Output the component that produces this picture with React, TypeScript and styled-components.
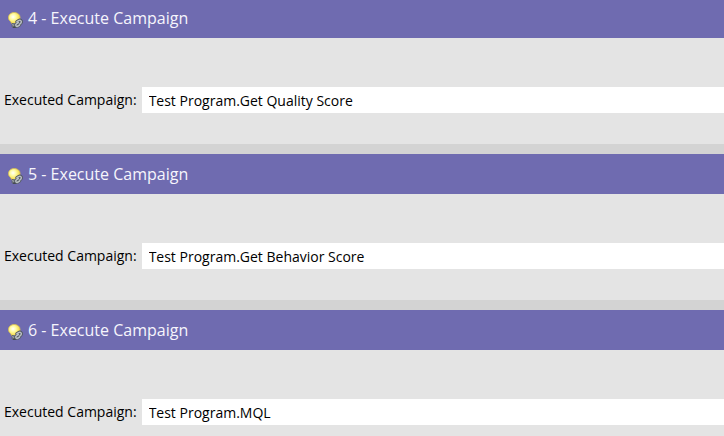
import React, { useId, useState } from "react";
import styled, { createGlobalStyle } from "styled-components";

const GlobalStyle = createGlobalStyle`
  * { box-sizing: border-box; }
  body {
    margin: 0;
    background: #d3d3d3;
    font-family: "Open Sans", "Noto Sans", sans-serif;
  }
`;

const Viewport = styled.main`
  height: 100vh;
  overflow: hidden;
`;

const StepList = styled.div`
  display: flex;
  flex-direction: column;
  gap: 10px;
  margin-top: -2px;
`;

const Step = styled.section`
  background: #e4e4e4;
`;

const StepHeader = styled.header`
  display: flex;
  align-items: center;
  gap: 4px;
  height: 40px;
  padding: 0 8px;
  background: #6f6bb0;
`;

const StepTitle = styled.h2`
  margin: 0;
  color: #f6f5fc;
  font-size: 16px;
  font-weight: 400;
  line-height: 24px;
`;

const BulbSvg = styled.svg`
  flex: none;
  width: 16px;
  height: 16px;
  margin-top: 4px;
`;

const StepBody = styled.div`
  display: flex;
  align-items: center;
  gap: 5px;
  padding: 49px 0 31px 4px;
`;

const FieldLabel = styled.label`
  flex: none;
  color: #000;
  font-size: 14px;
  line-height: 26px;
`;

const FieldInput = styled.input`
  flex: 1;
  min-width: 0;
  height: 26px;
  padding: 0 7px;
  border: 0;
  border-radius: 0;
  outline: 0;
  background: #fff;
  color: #000;
  font-family: inherit;
  font-size: 14px;
`;

function BulbIcon() {
  const id = useId();
  return (
    <BulbSvg viewBox="0 0 16 16" aria-hidden="true">
      <defs>
        <radialGradient id={id} cx="0.4" cy="0.4" r="0.65">
          <stop offset="0" stopColor="#ffffff" />
          <stop offset="0.4" stopColor="#fffba0" />
          <stop offset="1" stopColor="#f0d030" />
        </radialGradient>
      </defs>
      <path
        d="M6.2 0.4C2.8 0.4 0.4 2.7 0.4 5.6C0.4 7.6 1.5 8.7 2.6 9.7C3.3 10.4 3.6 11 3.7 11.7H8.6C8.7 10.9 9.2 10.2 10 9.4C11.3 8.3 12.1 7.2 12.1 5.6C12.1 2.7 9.6 0.4 6.2 0.4Z"
        fill={`url(#${id})`}
        stroke="#d3bd58"
        strokeWidth="0.8"
      />
      <path d="M3.8 11H9V14.4L7.6 16H5.1L3.8 14.4Z" fill="#454b50" />
      <path d="M4 12.3L7.8 11.8M4.2 14L7.6 13.4" stroke="#b9bec2" strokeWidth="0.9" />
      <g fill="none" strokeLinecap="round">
        <path
          d="M8.8 9.8L10.6 8.6C12.4 7.4 14.2 9.2 13 10.9L11.8 12M10.4 10.6L8.4 11.9C6.8 13.2 8.3 15.1 10 14L11.6 13"
          stroke="#50575e"
          strokeWidth="3"
        />
        <path
          d="M8.8 9.8L10.6 8.6C12.4 7.4 14.2 9.2 13 10.9L11.8 12M10.4 10.6L8.4 11.9C6.8 13.2 8.3 15.1 10 14L11.6 13"
          stroke="#b9bfc3"
          strokeWidth="1.5"
        />
      </g>
    </BulbSvg>
  );
}

function CampaignStep({ number, campaign }: { number: number; campaign: string }) {
  const id = useId();
  const [value, setValue] = useState(campaign);
  return (
    <Step>
      <StepHeader>
        <BulbIcon />
        <StepTitle>{number} - Execute Campaign</StepTitle>
      </StepHeader>
      <StepBody>
        <FieldLabel htmlFor={id}>Executed Campaign:</FieldLabel>
        <FieldInput id={id} type="text" value={value} onChange={(e) => setValue(e.target.value)} />
      </StepBody>
    </Step>
  );
}

const steps = [
  { number: 4, campaign: "Test Program.Get Quality Score" },
  { number: 5, campaign: "Test Program.Get Behavior Score" },
  { number: 6, campaign: "Test Program.MQL" },
];

export default function App() {
  return (
    <>
      <GlobalStyle />
      <Viewport>
        <StepList>
          {steps.map((step) => (
            <CampaignStep key={step.number} {...step} />
          ))}
        </StepList>
      </Viewport>
    </>
  );
}
